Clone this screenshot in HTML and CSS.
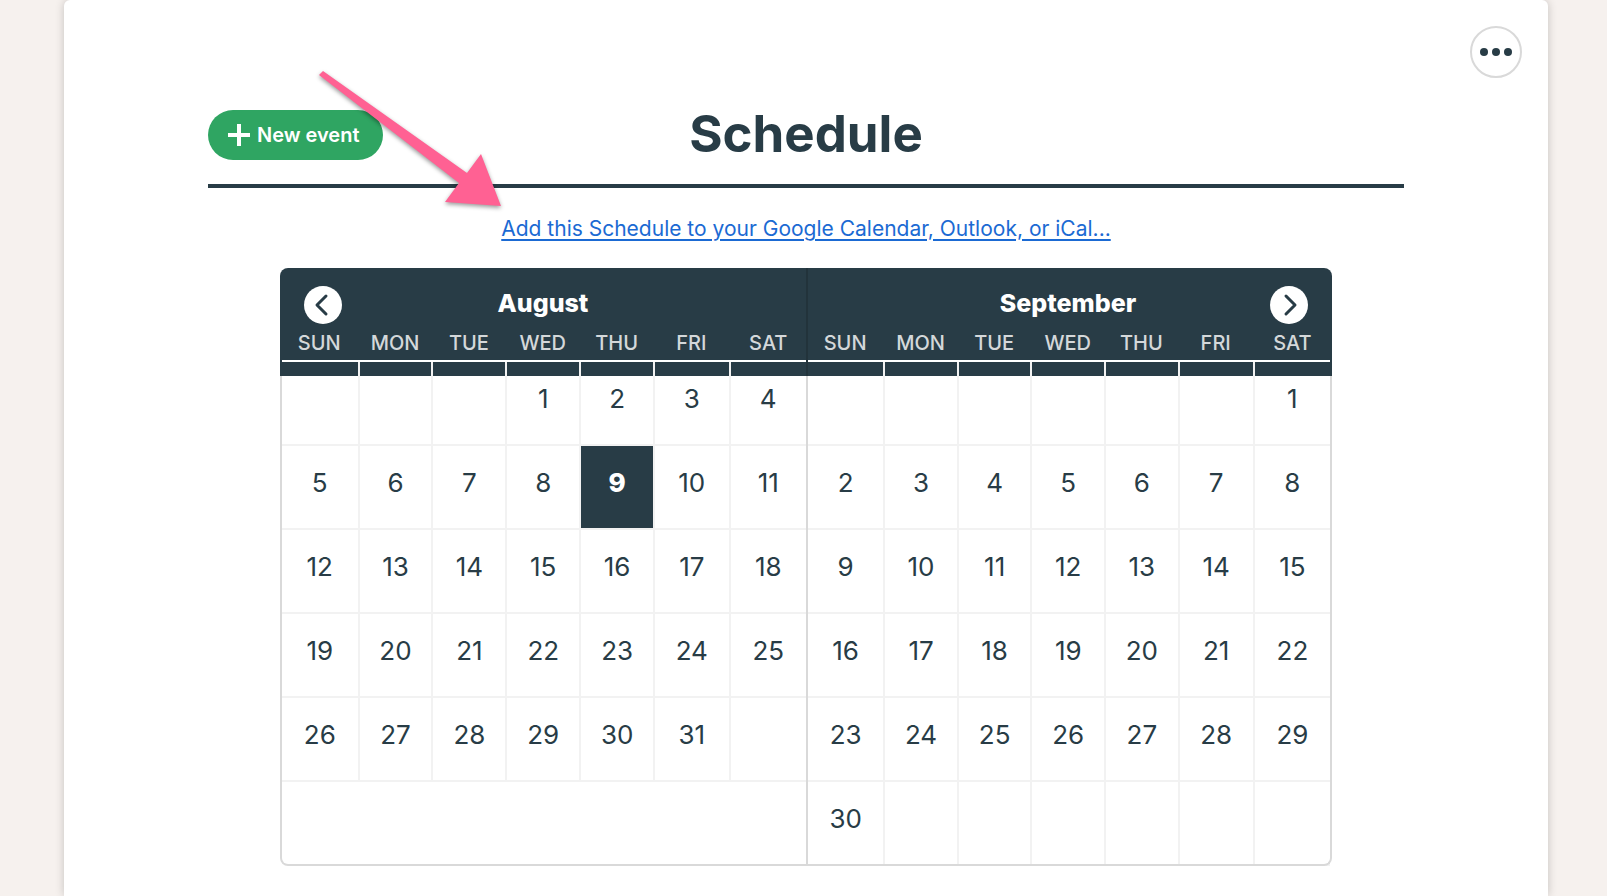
FILE: index.html
```html
<!DOCTYPE html>
<html lang="en">
<head>
    <meta charset="UTF-8">
    <meta name="viewport" content="width=device-width, initial-scale=1.0">
    <title>Schedule</title>
    <link rel="stylesheet" href="styles.css">
</head>
<body>
    <main class="sheet">
        <button class="menu-btn" type="button" aria-label="Options">
            <svg width="32" height="8" viewBox="0 0 32 8" fill="currentColor">
                <circle cx="4" cy="4" r="4"/>
                <circle cx="16" cy="4" r="4"/>
                <circle cx="28" cy="4" r="4"/>
            </svg>
        </button>

        <header class="sheet-header">
            <button class="new-btn" type="button">
                <svg width="22" height="22" viewBox="0 0 22 22" fill="none" stroke="currentColor" stroke-width="4">
                    <path d="M11 0v22M0 11h22"/>
                </svg>
                New event
            </button>
            <h1>Schedule</h1>
        </header>

        <p class="subscribe"><a href="#">Add this Schedule to your Google Calendar, Outlook, or iCal...</a></p>

        <div class="calendar">
            <button class="nav-btn prev" type="button" aria-label="Previous month">
                <svg width="38" height="38" viewBox="0 0 38 38" fill="none" stroke="currentColor" stroke-width="3" stroke-linecap="round" stroke-linejoin="round">
                    <path d="M22 10l-9 9 9 9"/>
                </svg>
            </button>
            <button class="nav-btn next" type="button" aria-label="Next month">
                <svg width="38" height="38" viewBox="0 0 38 38" fill="none" stroke="currentColor" stroke-width="3" stroke-linecap="round" stroke-linejoin="round">
                    <path d="M16 10l9 9-9 9"/>
                </svg>
            </button>

            <div class="month current">
                <table>
                    <caption>August</caption>
                    <colgroup><col class="first"><col span="4" class="mid"><col span="2" class="last"></colgroup>
                    <thead>
                        <tr><th>SUN</th><th>MON</th><th>TUE</th><th>WED</th><th>THU</th><th>FRI</th><th>SAT</th></tr>
                    </thead>
                    <tbody>
                        <tr><td></td><td></td><td></td><td>1</td><td>2</td><td>3</td><td>4</td></tr>
                        <tr><td>5</td><td>6</td><td>7</td><td>8</td><td class="today">9</td><td>10</td><td>11</td></tr>
                        <tr><td>12</td><td>13</td><td>14</td><td>15</td><td>16</td><td>17</td><td>18</td></tr>
                        <tr><td>19</td><td>20</td><td>21</td><td>22</td><td>23</td><td>24</td><td>25</td></tr>
                        <tr><td>26</td><td>27</td><td>28</td><td>29</td><td>30</td><td>31</td><td></td></tr>
                    </tbody>
                </table>
            </div>

            <div class="month">
                <table>
                    <caption>September</caption>
                    <colgroup><col class="first"><col span="4" class="mid"><col span="2" class="last"></colgroup>
                    <thead>
                        <tr><th>SUN</th><th>MON</th><th>TUE</th><th>WED</th><th>THU</th><th>FRI</th><th>SAT</th></tr>
                    </thead>
                    <tbody>
                        <tr><td></td><td></td><td></td><td></td><td></td><td></td><td>1</td></tr>
                        <tr><td>2</td><td>3</td><td>4</td><td>5</td><td>6</td><td>7</td><td>8</td></tr>
                        <tr><td>9</td><td>10</td><td>11</td><td>12</td><td>13</td><td>14</td><td>15</td></tr>
                        <tr><td>16</td><td>17</td><td>18</td><td>19</td><td>20</td><td>21</td><td>22</td></tr>
                        <tr><td>23</td><td>24</td><td>25</td><td>26</td><td>27</td><td>28</td><td>29</td></tr>
                        <tr><td>30</td><td></td><td></td><td></td><td></td><td></td><td></td></tr>
                    </tbody>
                </table>
            </div>
        </div>

        <!-- Arrow pointing at the subscribe link -->
        <svg class="arrow" width="200" height="150" viewBox="0 0 200 150" fill="#ff6193">
            <path d="M13 1L157 103L171 84L191 136L135 132L149 113L9 5Z"/>
        </svg>
    </main>
</body>
</html>
```

FILE: styles.css
```css
* {
    margin: 0;
    padding: 0;
    box-sizing: border-box;
}

body {
    font-family: Inter, "Liberation Sans", sans-serif;
    color: #283c46;
    background-color: #f6f1ee;
    overflow-x: hidden;
}

button {
    border: none;
    font-family: inherit;
    cursor: pointer;
}

svg {
    display: block;
}

.sheet {
    position: relative;
    min-height: 100vh;
    margin: 0 59px 0 64px;
    padding: 106px 144px 30px;
    background-color: #fff;
    border-radius: 6px 6px 0 0;
    box-shadow: 0 0 10px rgba(0, 0, 0, 0.2);
}

.menu-btn {
    position: absolute;
    top: 26px;
    right: 26px;
    display: flex;
    align-items: center;
    justify-content: center;
    width: 52px;
    height: 52px;
    color: #283c46;
    background-color: #fff;
    border: 2px solid #d9d9d9;
    border-radius: 50%;
}

/* Header */
.sheet-header {
    display: grid;
    grid-template-columns: 1fr auto 1fr;
    align-items: center;
    height: 82px;
    padding-bottom: 20px;
    border-bottom: 4px solid #283c46;
}

.new-btn {
    display: flex;
    align-items: center;
    justify-self: start;
    gap: 7px;
    height: 50px;
    padding: 0 24px 0 20px;
    font-size: 20px;
    font-weight: 600;
    color: #fff;
    background-color: #2fa562;
    border-radius: 25px;
}

h1 {
    grid-column: 2;
    font-size: 51px;
    font-weight: 700;
    line-height: 54px;
    padding-bottom: 2px;
}

.subscribe {
    padding: 27px 0 25px;
    font-size: 21px;
    line-height: 28px;
    text-align: center;
}

.subscribe a {
    color: #1b6ad3;
    text-decoration-thickness: 2px;
    text-underline-offset: 3px;
}

/* Calendar */
.calendar {
    position: relative;
    display: flex;
    max-width: 1052px;
    margin: 0 auto;
    background: linear-gradient(#283c46 108px, #fff 108px);
    border-radius: 8px;
}

.calendar::after {
    content: "";
    position: absolute;
    inset: 108px 0 0;
    border: 2px solid #d9d9d9;
    border-top: none;
    border-radius: 0 0 8px 8px;
    pointer-events: none;
}

.month {
    flex: 1;
    padding-right: 2px;
}

.month.current {
    flex: 0 0 calc(50% + 2px);
    padding: 0 0 0 2px;
    border-right: 2px solid rgba(0, 0, 0, 0.15);
}

.nav-btn {
    position: absolute;
    top: 18px;
    width: 38px;
    height: 38px;
    color: #283c46;
    background-color: #fff;
    border-radius: 50%;
}

.prev { left: 24px; }
.next { right: 24px; }

table {
    width: 100%;
    table-layout: fixed;
    border-collapse: separate;
    border-spacing: 0;
}

.first { width: 14.8%; }
.mid { width: 14.1%; }
.last { width: 14.4%; }

caption {
    height: 58px;
    padding: 18px 2px 0 0;
    font-size: 25px;
    font-weight: 800;
    line-height: 34px;
    color: #fff;
}

th {
    height: 36px;
    padding-right: 3px;
    font-size: 20px;
    font-weight: 500;
    line-height: 32px;
    color: #d4d8da;
    border-bottom: 2px solid #fff;
}

th:last-child {
    padding-right: 0;
}

td {
    height: 84px;
    padding-bottom: 8px;
    font-size: 26px;
    line-height: 32px;
    text-align: center;
    vertical-align: middle;
    border-right: 2px solid #f2f2f2;
    border-bottom: 2px solid #f2f2f2;
}

td:last-child {
    border-right: none;
}

.today {
    font-weight: 800;
    color: #fff;
    background-color: #283c46;
    background-clip: padding-box;
}

.arrow {
    position: absolute;
    top: 70px;
    left: 246px;
    filter: drop-shadow(0 2px 2px rgba(0, 0, 0, 0.4));
    pointer-events: none;
}
```
